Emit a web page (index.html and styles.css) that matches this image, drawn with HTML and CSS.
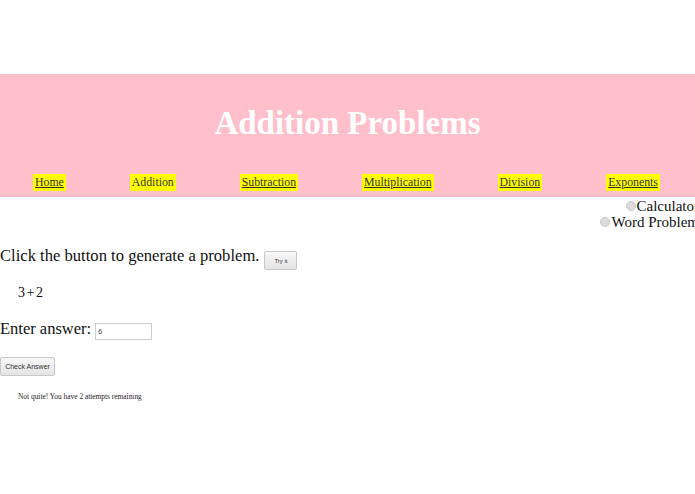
FILE: index.html
```html
<!DOCTYPE html>
<html>
<head>
<meta charset="utf-8">
<link rel="stylesheet" href="styles.css">
</head>
<body>
<div class="top-space"></div>
<header class="banner">
  <h1 class="title">Addition Problems</h1>
  <nav class="nav">
    <a class="nav-link linked" href="#">Home</a>
    <span class="nav-link">Addition</span>
    <a class="nav-link linked" href="#">Subtraction</a>
    <a class="nav-link linked" href="#">Multiplication</a>
    <a class="nav-link linked" href="#">Division</a>
    <a class="nav-link linked" href="#">Exponents</a>
  </nav>
</header>
<div class="modes">
  <label class="mode"><span class="radio"></span>Calculator</label>
  <label class="mode"><span class="radio"></span>Word Problem</label>
</div>
<div class="prompt"><span>Click the button to generate a problem.</span><button class="btn btn-try">Try it</button></div>
<p class="problem">3+2</p>
<div class="answer-row"><span>Enter answer:</span><span class="input">6</span></div>
<button class="btn btn-check">Check Answer</button>
<p class="feedback">Not quite! You have 2 attempts remaining</p>
</body>
</html>
```

FILE: styles.css
```css
html, body {
  margin: 0;
  padding: 0;
  overflow: hidden;
  background: #fff;
  font-family: "Liberation Serif", "Times New Roman", serif;
  color: #111;
}
.top-space {
  height: 74px;
}
.banner {
  background: #ffc0cb;
  height: 123px;
  display: flex;
  flex-direction: column;
}
.title {
  margin: 0;
  padding-top: 31px;
  height: 52px;
  text-align: center;
  color: #fff;
  font-size: 33px;
  font-weight: bold;
  line-height: 36px;
}
.nav {
  display: flex;
  justify-content: space-around;
  padding: 17px 3px 0 1px;
}
.nav-link {
  background: #ffff00;
  color: #333;
  font-size: 11.8px;
  line-height: 17px;
  padding: 0 2px;
}
.linked {
  text-decoration: underline;
}
.modes {
  display: flex;
  flex-direction: column;
  align-items: flex-end;
  margin-right: -4px;
  padding-top: 1px;
}
.mode {
  font-size: 15px;
  line-height: 16px;
  display: flex;
  align-items: center;
  white-space: nowrap;
  color: #111;
}
.radio {
  width: 8px;
  height: 8px;
  border-radius: 50%;
  background: #dcdcdc;
  border: 1px solid #c8c8c8;
  margin-right: 1px;
}
.prompt {
  margin: 14px 0 0;
  font-size: 16.6px;
  line-height: 24px;
  display: flex;
  align-items: flex-start;
  gap: 5px;
}
.btn {
  font-family: "Liberation Sans", Arial, sans-serif;
  background: linear-gradient(#f8f8f8, #e4e4e4);
  border: 1px solid #c8c8c8;
  border-radius: 2px;
  color: #333;
  padding: 0;
}
.btn-try {
  width: 33px;
  height: 19px;
  font-size: 6px;
  margin-top: 7px;
}
.problem {
  margin: 13px 0 0 18px;
  font-size: 14px;
  letter-spacing: 1.5px;
  line-height: 20px;
}
.answer-row {
  margin: 14px 0 0;
  font-size: 16.5px;
  line-height: 24px;
  display: flex;
  align-items: flex-start;
  gap: 4px;
}
.input {
  display: inline-block;
  width: 53px;
  height: 15px;
  border: 1px solid #ccc;
  font-family: "Liberation Sans", Arial, sans-serif;
  font-size: 7px;
  line-height: 15px;
  padding-left: 2px;
  margin-top: 6px;
  color: #444;
}
.btn-check {
  display: block;
  margin-top: 16px;
  width: 55px;
  height: 19px;
  font-size: 7px;
}
.feedback {
  margin: 16px 0 0 18px;
  font-size: 7.4px;
  line-height: 10px;
  color: #222;
}
```
